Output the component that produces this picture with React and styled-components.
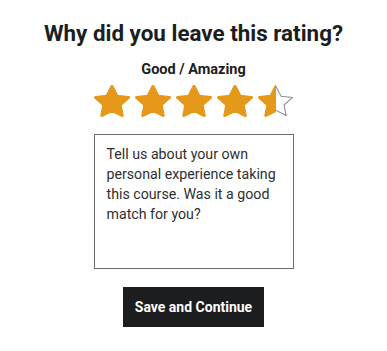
import React from "react";
import styled, { createGlobalStyle } from "styled-components";

const GlobalStyle = createGlobalStyle`
  body {
    margin: 0;
    background: #fff;
    font-family: Roboto, "Noto Sans", sans-serif;
    color: #1c1d1f;
  }
`;

const STAR_PATH =
  "M12 1.8 L15.17 8.43 L22.46 9.4 L17.14 14.47 L18.47 21.7 L12 18.2 L5.53 21.7 L6.86 14.47 L1.54 9.4 L8.83 8.43 Z";

// fill goes from 0 to 1 for each star
const ratings = [1, 1, 1, 1, 0.5];

const Star = ({ fill, id }) => (
  <StarSvg viewBox="0.54 0.8 22.92 21.9" preserveAspectRatio="none">
    <defs>
      <clipPath id={id}>
        <rect x="0" y="0" width={0.54 + 22.92 * fill} height="24" />
      </clipPath>
    </defs>
    {fill < 1 && (
      <path
        d={STAR_PATH}
        fill="#fff"
        stroke="#8b8d90"
        strokeWidth="0.7"
        strokeLinejoin="round"
      />
    )}
    <path
      d={STAR_PATH}
      fill="#e59819"
      stroke="#e59819"
      strokeWidth="2"
      strokeLinejoin="round"
      clipPath={fill < 1 ? `url(#${id})` : undefined}
    />
  </StarSvg>
);

export default function App() {
  return (
    <>
      <GlobalStyle />
      <Page>
        <Title>Why did you leave this rating?</Title>
        <RatingLabel>Good / Amazing</RatingLabel>
        <StarRow>
          {ratings.map((fill, i) => (
            <Star key={i} fill={fill} id={`star-clip-${i}`} />
          ))}
        </StarRow>
        <ReviewBox placeholder="Tell us about your own personal experience taking this course. Was it a good match for you?" />
        <SaveButton>Save and Continue</SaveButton>
      </Page>
    </>
  );
}

const Page = styled.div`
  display: flex;
  flex-direction: column;
  align-items: center;
  padding-top: 19px;
`;

const Title = styled.h2`
  margin: 0;
  font-size: 22.4px;
  line-height: 28px;
  font-weight: 700;
  color: #1c1d1f;
`;

const RatingLabel = styled.div`
  margin-top: 13px;
  font-size: 14.5px;
  line-height: 20px;
  font-weight: 700;
  color: #1c1d1f;
`;

const StarRow = styled.div`
  display: flex;
  gap: 5px;
  margin-top: 5px;
`;

const StarSvg = styled.svg`
  display: block;
  width: 36px;
  height: 32px;
`;

const ReviewBox = styled.textarea`
  box-sizing: border-box;
  width: 200px;
  height: 135px;
  margin-top: 17px;
  padding: 9px 12px;
  border: 1px solid #6a6f73;
  border-radius: 0;
  resize: none;
  font-family: Roboto, "Noto Sans", sans-serif;
  font-size: 14.2px;
  line-height: 20px;
  color: #2d2f31;
  outline: none;

  &::placeholder {
    color: #2d2f31;
    opacity: 1;
  }
`;

const SaveButton = styled.button`
  box-sizing: border-box;
  height: 40px;
  margin-top: 18px;
  padding: 0 12px;
  border: none;
  background: #1c1d1f;
  color: #fff;
  font-family: Roboto, "Noto Sans", sans-serif;
  font-size: 14px;
  font-weight: 700;
  cursor: pointer;
`;
